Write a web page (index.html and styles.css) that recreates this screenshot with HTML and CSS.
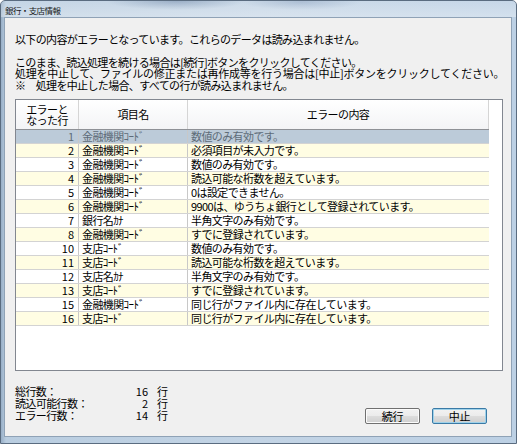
FILE: index.html
```html
<!DOCTYPE html>
<html lang="ja">
<head>
<meta charset="utf-8">
<title>銀行・支店情報</title>
<link rel="stylesheet" href="styles.css">
</head>
<body>
<div class="window">
  <div class="titlebar"><span class="title">銀行・支店情報</span></div>
  <div class="client">
    <div class="msg">
      <p>以下の内容がエラーとなっています。これらのデータは読み込まれません。</p>
      <p class="gap">このまま、読込処理を続ける場合は[続行]ボタンをクリックしてください。</p>
      <p class="wide">処理を中止して、ファイルの修正または再作成等を行う場合は[中止]ボタンをクリックしてください。</p>
      <p>※　処理を中止した場合、すべての行が読み込まれません。</p>
    </div>
    <div class="list">
      <div class="head">
        <div class="hc c1">エラーと<br>なった行</div>
        <div class="hc c2">項目名</div>
        <div class="hc c3">エラーの内容</div>
      </div>
      <div class="rows">
        <div class="row sel"><div class="c c1 num">1</div><div class="c c2">金融機関ｺｰﾄﾞ</div><div class="c c3">数値のみ有効です。</div></div>
        <div class="row alt"><div class="c c1 num">2</div><div class="c c2">金融機関ｺｰﾄﾞ</div><div class="c c3">必須項目が未入力です。</div></div>
        <div class="row"><div class="c c1 num">3</div><div class="c c2">金融機関ｺｰﾄﾞ</div><div class="c c3">数値のみ有効です。</div></div>
        <div class="row alt"><div class="c c1 num">4</div><div class="c c2">金融機関ｺｰﾄﾞ</div><div class="c c3">読込可能な桁数を超えています。</div></div>
        <div class="row"><div class="c c1 num">5</div><div class="c c2">金融機関ｺｰﾄﾞ</div><div class="c c3">0は設定できません。</div></div>
        <div class="row alt"><div class="c c1 num">6</div><div class="c c2">金融機関ｺｰﾄﾞ</div><div class="c c3">9900は、ゆうちょ銀行として登録されています。</div></div>
        <div class="row"><div class="c c1 num">7</div><div class="c c2">銀行名ｶﾅ</div><div class="c c3">半角文字のみ有効です。</div></div>
        <div class="row alt"><div class="c c1 num">8</div><div class="c c2">金融機関ｺｰﾄﾞ</div><div class="c c3">すでに登録されています。</div></div>
        <div class="row"><div class="c c1 num">10</div><div class="c c2">支店ｺｰﾄﾞ</div><div class="c c3">数値のみ有効です。</div></div>
        <div class="row alt"><div class="c c1 num">11</div><div class="c c2">支店ｺｰﾄﾞ</div><div class="c c3">読込可能な桁数を超えています。</div></div>
        <div class="row"><div class="c c1 num">12</div><div class="c c2">支店名ｶﾅ</div><div class="c c3">半角文字のみ有効です。</div></div>
        <div class="row alt"><div class="c c1 num">13</div><div class="c c2">支店ｺｰﾄﾞ</div><div class="c c3">すでに登録されています。</div></div>
        <div class="row"><div class="c c1 num">15</div><div class="c c2">金融機関ｺｰﾄﾞ</div><div class="c c3">同じ行がファイル内に存在しています。</div></div>
        <div class="row alt"><div class="c c1 num">16</div><div class="c c2">支店ｺｰﾄﾞ</div><div class="c c3">同じ行がファイル内に存在しています。</div></div>
      </div>
    </div>
    <div class="footer">
      <div class="stats">
        <div class="lbl">総行数：</div><div class="val">16</div><div class="unit">行</div>
        <div class="lbl">読込可能行数：</div><div class="val">2</div><div class="unit">行</div>
        <div class="lbl">エラー行数：</div><div class="val">14</div><div class="unit">行</div>
      </div>
      <div class="buttons">
        <button class="btn">続行</button>
        <button class="btn default">中止</button>
      </div>
    </div>
  </div>
</div>
</body>
</html>
```
FILE: styles.css
```css
* { box-sizing: border-box; }
html, body {
  margin: 0;
  padding: 0;
  width: 517px;
  height: 444px;
  overflow: hidden;
  background: #ffffff;
}
body {
  font-family: "Noto Sans CJK JP", sans-serif;
  font-size: 11px;
  color: #000;
}
.window {
  width: 517px;
  height: 444px;
  display: flex;
  flex-direction: column;
  border: 1px solid #5a6c80;
  border-radius: 5px 5px 0 0;
  background:
    radial-gradient(ellipse 70px 9px at 175px 0px, rgba(70,100,140,0.45), rgba(70,100,140,0)),
    radial-gradient(ellipse 60px 8px at 300px 1px, rgba(90,120,160,0.35), rgba(90,120,160,0)),
    linear-gradient(to right, #98afc7 0px, #b9cde0 5px, #c3d4e5 50%, #bcd0e4 100%);
}
.titlebar {
  height: 16px;
  padding-left: 4px;
  display: flex;
  align-items: center;
  background: linear-gradient(to bottom, rgba(255,255,255,0.15), rgba(255,255,255,0.35));
}
.title {
  font-size: 8.5px;
  letter-spacing: -0.6px;
  color: #1a1a1a;
  line-height: 10px;
  padding-top: 1px;
}
.client {
  flex: 1;
  margin: 0 4px 6px 3px;
  border: 1px solid #8fa2b6;
  background: #f0f0f0;
  padding: 16px 8px 0 10px;
  display: flex;
  flex-direction: column;
}
.msg p {
  margin: 0;
  line-height: 11.5px;
  letter-spacing: -0.65px;
  white-space: nowrap;
}
.msg p.gap { margin-top: 11px; }
.msg p.wide { letter-spacing: -0.25px; }
.list {
  margin-top: 8px;
  width: 488px;
  height: 272px;
  border: 1px solid #828790;
  background: #fff;
}
.head {
  display: flex;
  height: 30px;
  width: 473px;
  background: linear-gradient(to bottom, #ffffff, #f3f4f6);
  border-bottom: 1px solid #8e9196;
}
.hc {
  display: flex;
  align-items: center;
  justify-content: center;
  text-align: center;
  line-height: 10.5px;
  letter-spacing: -0.6px;
  border-right: 1px solid #d5d5d5;
}
.c1 { width: 63px; flex: none; }
.c2 { width: 109px; flex: none; }
.c3 { width: 301px; flex: none; }
.rows { width: 473px; }
.row {
  display: flex;
  height: 14px;
  border-bottom: 1px solid #d3d3d3;
  background: #ffffff;
}
.row.alt { background: #fffde3; }
.row.sel { background: #bccbd9; color: #5e6b78; }
.c {
  line-height: 13px;
  padding-left: 3px;
  border-right: 1px solid #c8c8c8;
  letter-spacing: -0.6px;
  white-space: nowrap;
}
.c.num {
  text-align: right;
  padding-left: 0;
  padding-right: 4px;
  letter-spacing: 0;
}
.c.c3 { border-right: none; }
.footer {
  flex: 1;
  display: flex;
  justify-content: space-between;
  align-items: flex-end;
  padding: 0 16px 12px 0;
}
.stats {
  display: grid;
  grid-template-columns: 110px 23px 19px;
  line-height: 12px;
  margin-bottom: 3px;
  letter-spacing: -0.6px;
}
.val { text-align: right; letter-spacing: 0; }
.unit { padding-left: 9px; }
.buttons {
  display: flex;
  gap: 12px;
}
.btn {
  width: 55px;
  height: 16px;
  padding: 0;
  font-family: "Noto Sans CJK JP", sans-serif;
  font-size: 11px;
  line-height: 13px;
  letter-spacing: -0.3px;
  color: #000;
  border: 1px solid #707070;
  border-radius: 2px;
  background: linear-gradient(to bottom, #f2f2f2 0%, #ebebeb 50%, #dddddd 50%, #cfcfcf 100%);
  box-shadow: inset 0 0 0 1px #fbfbfb;
}
.btn.default {
  border-color: #3a7aa6;
  box-shadow: inset 0 0 0 1px #9fd2ea;
}
```
